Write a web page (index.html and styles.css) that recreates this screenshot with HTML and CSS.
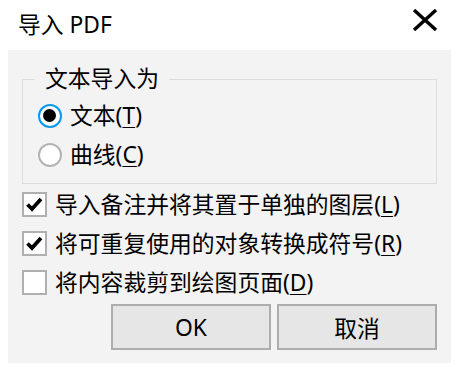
FILE: index.html
```html
<!DOCTYPE html>
<html lang="zh-CN">
<head>
    <meta charset="UTF-8">
    <title>导入 PDF</title>
    <link rel="stylesheet" href="styles.css">
</head>
<body>
    <div class="titlebar">
        <span class="title">导入 PDF</span>
        <button class="close" aria-label="关闭">
            <svg width="26" height="22" viewBox="0 0 26 22">
                <path d="M2 1 L24 21 M24 1 L2 21" stroke="#000" stroke-width="3.4" fill="none"/>
            </svg>
        </button>
    </div>

    <div class="panel">
        <fieldset class="group">
            <legend>文本导入为</legend>
            <label class="row radio-row"><span class="radio on"></span>文本(<u>T</u>)</label>
            <label class="row radio-row"><span class="radio"></span>曲线(<u>C</u>)</label>
        </fieldset>

        <label class="row"><span class="check"><svg width="21" height="21" viewBox="0 0 21 21"><path d="M3.5 10.5 L8 15 L17 5" stroke="#000" stroke-width="3.8" fill="none"/></svg></span>导入备注并将其置于单独的图层(<u>L</u>)</label>
        <label class="row"><span class="check"><svg width="21" height="21" viewBox="0 0 21 21"><path d="M3.5 10.5 L8 15 L17 5" stroke="#000" stroke-width="3.8" fill="none"/></svg></span>将可重复使用的对象转换成符号(<u>R</u>)</label>
        <label class="row"><span class="check"></span>将内容裁剪到绘图页面(<u>D</u>)</label>

        <div class="buttons">
            <button class="btn">OK</button>
            <button class="btn">取消</button>
        </div>
    </div>
</body>
</html>
```

FILE: styles.css
```css
body {
    margin: 0;
    background: #ffffff;
    color: #000000;
    font-family: "Noto Sans", "Noto Sans CJK SC", sans-serif;
    font-size: 22.8px;
}
.titlebar {
    height: 50px;
    display: flex;
    align-items: center;
    justify-content: space-between;
    padding: 0 20px 0 18px;
}
.title {
    line-height: 50px;
}
.close {
    background: none;
    border: none;
    padding: 0;
    margin-top: -10px;
    display: flex;
}
.panel {
    margin-left: 8px;
    width: 443px;
    height: 313px;
    box-sizing: border-box;
    padding: 16px 14px 13px 14px;
    background: #f3f3f3;
}
.group {
    margin: 0;
    padding: 4px 0 9px 0;
    border: 1px solid #dcdcdc;
}
.group legend {
    margin-left: 12px;
    padding: 0 10px;
    line-height: 26px;
}
.row {
    display: flex;
    align-items: center;
    height: 39px;
    line-height: 39px;
}
.row u {
    text-decoration-thickness: 1px;
    text-underline-offset: 3px;
}
.radio-row {
    padding-left: 15px;
}
.radio {
    width: 24px;
    height: 24px;
    box-sizing: border-box;
    border: 2px solid #b4b4b4;
    border-radius: 50%;
    background: #ffffff;
    margin-right: 8px;
    position: relative;
}
.radio.on {
    border: 2.5px solid #0a98ef;
}
.radio.on::after {
    content: "";
    position: absolute;
    left: 3px;
    top: 3px;
    width: 13px;
    height: 13px;
    border-radius: 50%;
    background: #000000;
}
.check {
    width: 25px;
    height: 25px;
    box-sizing: border-box;
    border: 2px solid #b0b0b0;
    background: #ffffff;
    margin-right: 8px;
    display: flex;
    align-items: center;
    justify-content: center;
}
.group + .row {
    margin-top: 1px;
}
.buttons {
    display: flex;
    justify-content: flex-end;
    gap: 6px;
    margin-top: 2px;
}
.btn {
    width: 160px;
    height: 46px;
    border: 2px solid #adadad;
    background: #e6e6e6;
    font-family: inherit;
    font-size: 22.8px;
    color: #000000;
    padding: 0;
}
```
